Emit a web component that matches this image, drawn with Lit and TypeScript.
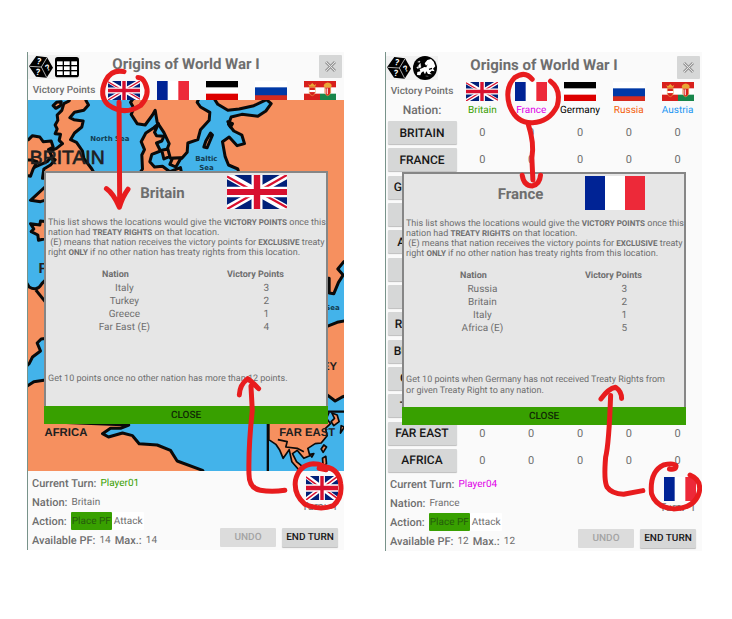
import { LitElement, html, svg, css, nothing } from "lit";
import { customElement, property } from "lit/decorators.js";
import { classMap } from "lit/directives/class-map.js";

type Nation = "britain" | "france" | "germany" | "russia" | "austria";

interface Player {
  view: "map" | "table";
  nation: Nation;
  name: string;
  player: string;
  forces: number;
  points: [string, number][];
  bonus: string;
}

const NATIONS: [Nation, string][] = [
  ["britain", "Britain"],
  ["france", "France"],
  ["germany", "Germany"],
  ["russia", "Russia"],
  ["austria", "Austria"],
];

const REGIONS = [
  "BRITAIN", "FRANCE", "GERMANY", "ITALY", "AUSTRIA", "SPAIN", "EGYPT",
  "ROMANIA", "BULGARIA", "GREECE", "TURKEY", "FAR EAST", "AFRICA",
];

const PLAYERS: Player[] = [
  {
    view: "map", nation: "britain", name: "Britain", player: "Player01", forces: 14,
    points: [["Italy", 3], ["Turkey", 2], ["Greece", 1], ["Far East (E)", 4]],
    bonus: "Get 10 points once no other nation has more than 12 points.",
  },
  {
    view: "table", nation: "france", name: "France", player: "Player04", forces: 12,
    points: [["Russia", 3], ["Britain", 2], ["Italy", 1], ["Africa (E)", 5]],
    bonus: "Get 10 points when Germany has not received Treaty Rights from or given Treaty Right to any nation.",
  },
];

const flagArt = {
  britain: svg`
    <rect width="60" height="36" fill="#012079"/>
    <path d="M0 0L60 36M60 0L0 36" stroke="#fff" stroke-width="7.5"/>
    <path d="M0 1.5L28 18M60 34.5L32 18M60 0L32 17M0 36L28 19" stroke="#d8102e" stroke-width="2.4"/>
    <path d="M30 0V36M0 18H60" stroke="#fff" stroke-width="11"/>
    <path d="M30 0V36M0 18H60" stroke="#d8102e" stroke-width="6.4"/>`,
  france: svg`
    <rect width="60" height="36" fill="#fff"/>
    <rect width="20" height="36" fill="#002395"/>
    <rect x="40" width="20" height="36" fill="#ed2939"/>`,
  germany: svg`
    <rect width="60" height="36" fill="#fff"/>
    <rect width="60" height="12" fill="#000"/>
    <rect y="24" width="60" height="12" fill="#d00"/>`,
  russia: svg`
    <rect width="60" height="36" fill="#fff"/>
    <rect y="12" width="60" height="24" fill="#0039a6"/>
    <rect y="27" width="60" height="9" fill="#d52b1e"/>`,
  austria: svg`
    <rect width="60" height="36" fill="#fff"/>
    <rect width="60" height="12" fill="#d8201c"/>
    <rect y="24" width="30" height="12" fill="#d8201c"/>
    <rect x="30" y="24" width="30" height="12" fill="#18864b"/>
    <path d="M10 12H21V22Q20 27 15.500 28Q11 27 10 22Z" fill="#d8201c" stroke="#e9b44a"/>
    <path d="M10 17H21V21H10Z" fill="#fff"/>
    <path d="M8 5L11 8L15.500 4L20 8L23 5L21 11H10Z" fill="#e9a735"/>
    <path d="M39 12H50V22Q49 27 44.500 28Q40 27 39 22Z" fill="#d8201c" stroke="#e9b44a"/>
    <path d="M37 10Q37 4 44.500 3Q52 4 52 10L50 12H39Z" fill="#e9a735"/>
    <path d="M41 14V24M44 14V25" stroke="#fff" stroke-width="1.500"/>`,
};

const flag = (n: Nation, size: string) => html`
  <svg class="flag ${size}" viewBox="0 0 60 36" preserveAspectRatio="none" role="img" aria-label=${n}>${flagArt[n]}</svg>`;

const diceIcon = html`
  <svg class="icon" viewBox="0 0 72 72" aria-hidden="true">
    <path d="M22 3L54 7L72 38L53 68L21 65L0 34Z" fill="#000"/>
    <path d="M2 34L37 36L54 8M37 36L53 67" fill="none" stroke="#fff" stroke-width="2"/>
    <g fill="#fff" font-family="Roboto, sans-serif" font-weight="700" font-size="26" text-anchor="middle">
      <text x="30" y="28" transform="rotate(12 30 20)">?</text>
      <text x="27" y="60" transform="rotate(6 27 50)">?</text>
      <text x="56" y="47" transform="rotate(-24 56 38)">?</text>
    </g>
  </svg>`;

const tableIcon = html`
  <svg class="icon" viewBox="0 0 72 72" aria-hidden="true">
    <rect y="6" width="72" height="61" rx="8" fill="#000"/>
    <g fill="#fff">
      ${[19, 34, 49].map((y) => [6, 27, 49].map((x) => svg`<rect x=${x} y=${y} width="17" height="11"/>`))}
    </g>
  </svg>`;

const globeIcon = html`
  <svg class="icon" viewBox="0 0 72 72" aria-hidden="true">
    <circle cx="36" cy="36" r="36" fill="#000"/>
    <path d="M35 22L43 12L54 9L62 17L67 31L60 38L65 46L56 44L50 50L57 55L45 54L40 46L36 55L31 46L25 50L22 58L12 57L13 48L22 46L20 39L27 37L34 33L40 34L44 25L39 29Z" fill="#fff"/>
    <path d="M17 28L22 22L24 34L16 37ZM11 34L15 32L14 38ZM14 18L21 15L20 19ZM38 60L46 61" fill="#fff" stroke="#fff"/>
    <path d="M48 40L57 37" stroke="#000" stroke-width="4"/>
  </svg>`;

/* Europe, with the Far East in an inset at the lower right */
const map = html`
  <svg class="map" viewBox="21 165 951 1113" preserveAspectRatio="xMidYMid slice" role="img" aria-label="Map of Europe">
    <rect x="21" y="165" width="951" height="1113" fill="#43b3ea"/>
    <g fill="#f6905f" stroke="#0a0a0a" stroke-width="9" stroke-linejoin="round">
      <path d="M98 182L108 172L122 170L120 182L106 190Z"/>
      <path d="M150 150L146 168L130 176L124 196L110 210L112 226L104 240L110 252L104 266L120 268L116 286L126 296L108 310L88 318L92 336L104 344L90 360L70 372L66 400H230L214 372L190 340L186 318L168 292L150 284L162 264L184 246L188 228L160 224L148 218L162 202L190 196L204 180L196 166L206 150Z"/>
      <path d="M10 290L24 284L36 272L58 276L68 290L92 288L98 306L84 314L94 334L80 350L44 366L10 376Z"/>
      <path d="M346 150L330 172L340 190L332 208L350 236L374 240L396 210L404 196L410 232L430 262L446 296L438 318L450 340H484L500 322L502 294L532 284L540 254L566 226L568 202L540 186L530 172L540 150Z"/>
      <path d="M574 150L592 178L622 196L656 192L700 182L738 164L752 176L736 198L712 214L664 208L632 216L624 238L640 258L664 270L672 296L650 302L626 276L606 290L614 335L624 360L652 372L664 420H880V700H926L926 744L940 746L954 712L968 690L952 672L970 650L1000 640V150Z"/>
      <path d="M340 410L366 372L364 330L372 314L362 290L376 264L400 248L414 236L402 262L408 272L430 274L424 288L408 294L420 318L394 328L388 350L402 366L426 364L448 380L480 368L486 400Z"/>
      <path d="M424 316L442 312L448 334L430 342ZM456 340L482 338L466 366L448 358ZM556 288L570 264L576 270L560 308L550 306ZM622 230L636 236L630 246Z"/>
      <path d="M10 345L34 345L50 350L38 372L30 394L10 390ZM80 420L30 466L60 470L80 464V416Z"/>
      <path d="M80 530L60 528L58 540L30 536L40 552L32 560L52 570L54 586L80 580Z"/>
      <path d="M10 700L26 726Q50 740 64 716L80 700V880L62 882L50 894L60 918L36 936L26 956L10 970Z"/>
      <path d="M46 735L74 770" fill="none"/>
      <path d="M10 1030L40 1010L80 1004V1130L325 1140L300 1150H270L246 1166L264 1176L306 1164L336 1172L356 1196L410 1200L450 1216L470 1248L546 1276L560 1300H10Z"/>
      <path d="M880 860L950 832L990 824V1048L965 1056L944 1068L915 1046L880 1050Z"/>
    </g>
    <path d="M742 1090V1290M742 1100H980" stroke="#0a0a0a" stroke-width="7"/>
    <g fill="#f6905f" stroke="#0a0a0a" stroke-width="5" stroke-linejoin="round">
      <path d="M745 1104H925L918 1120L930 1136L915 1150L920 1172L902 1194L884 1196L862 1210L868 1232L850 1240L830 1216L816 1226L828 1250L850 1268L836 1276L814 1250L806 1214L788 1240L778 1216L766 1198L745 1184Z"/>
      <path d="M934 1104L950 1110L956 1130L940 1142L932 1130L942 1120ZM910 1200L918 1206L908 1222L902 1212ZM906 1240L916 1234L918 1256L908 1264ZM962 1142L972 1146L960 1164ZM868 1228L880 1226L874 1236Z"/>
      <path d="M772 1184L800 1190L796 1206L830 1210L850 1220" fill="none"/>
    </g>
    <g class="place" fill="#202020">
      <text class="country" x="28" y="357">BRITAIN</text>
      <text x="54" y="684" font-size="44">FRANCE</text>
      <text x="72" y="1173">AFRICA</text>
      <text x="776" y="1173">FAR EAST</text>
      <text x="950" y="975" text-anchor="end">TURKEY</text>
    </g>
    <g class="sea" fill="#123c50">
      <text x="209" y="289">North Sea</text>
      <text x="524" y="349">Baltic</text>
      <text x="536" y="375">Sea</text>
      <text x="914" y="796">Sea</text>
    </g>
  </svg>`;

const marks = {
  map: svg`
    <path d="M310 80Q272 72 254 108Q234 152 262 180Q310 214 360 182Q390 150 374 116Q366 98 352 98"/>
    <path d="M295 172L297 480M257 432Q278 446 296 488Q306 456 322 434"/>
    <path d="M657 1053Q658 1022 682 1004Q696 1014 715 1034M692 1026L696 1100Q684 1210 686 1290Q686 1334 720 1340Q754 1346 794 1340"/>
    <path d="M897 1274L918 1278Q912 1260 880 1260Q836 1264 826 1310Q820 1352 854 1382Q900 1402 940 1386Q968 1362 962 1320Q956 1270 902 1268"/>`,
  table: svg`
    <path d="M455 103Q434 76 402 98Q372 130 386 180Q406 236 456 234Q506 232 530 184Q544 134 510 109"/>
    <path d="M443 238Q462 296 454 340L457 406M425 392Q430 424 456 424Q478 418 480 392"/>
    <path d="M662 1065Q684 1034 706 1030Q724 1042 724 1064M691 1055Q686 1200 676 1240Q670 1310 680 1330Q694 1350 730 1352L788 1341"/>
    <path d="M868 1276Q888 1280 888 1266Q880 1256 850 1264Q808 1284 814 1350Q828 1392 880 1396Q946 1394 958 1344Q964 1308 930 1294"/>`,
};

@customElement("game-panel")
export class GamePanel extends LitElement {
  @property({ attribute: false }) data!: Player;

  static styles = css`
    :host { display: block; min-width: 0; }
    .panel {
      position: relative; background: #fafafa; border-left: 1px solid #78938a;
      color: #6e6e6e; overflow: hidden; font-size: 10px; text-rendering: geometricPrecision;
    }
    .panel.table { padding-top: 1px; }
    button { font-family: inherit; text-rendering: inherit; border: 0; padding: 0; margin: 0; border-radius: 1px; color: #161616; }
    .header { display: grid; grid-template-columns: 52px 1fr 52px; height: 29px; }
    .tools { display: flex; gap: 2px; align-self: start; background: #f1f1f1; margin-top: 3px; padding-left: 1px; height: 24px; }
    .tool { background: none; width: 24px; height: 24px; }
    .icon { display: block; width: 24px; height: 24px; }
    .title { margin: 0; font-size: 15px; line-height: 24px; font-weight: 700; text-align: center; white-space: nowrap; }
    .quit { justify-self: end; width: 23px; height: 23px; margin: 3px 2px 0 0; background: #d6d7d7; }
    .quit svg { display: block; width: 13px; height: 13px; margin: 0 auto; }
    .nations, .names, .scores tr { display: grid; grid-template-columns: 72px repeat(5, 1fr); align-items: center; justify-items: center; }
    .nations { height: 19px; }
    .label { font-weight: 500; white-space: nowrap; font-size: 10px; }
    .flag { display: block; }
    .small { width: 32px; height: 19px; }
    .turnflag { width: 32px; height: 24px; }
    .big { width: 60px; height: 34px; }
    .names { height: 18px; }
    .names .label { font-size: 12px; }
    .map { display: block; width: 100%; height: 371px; }
    .place { font-family: "Liberation Sans", sans-serif; font-weight: 700; font-size: 34px; }
    .country { font-size: 58px; font-weight: 400; stroke: #202020; stroke-width: 2px; }
    .sea { font-family: "DejaVu Sans", sans-serif; font-weight: 700; font-size: 21px; }

    .scores { display: flex; flex-direction: column; height: 355px; margin: 0; }
    .scores tbody { display: flex; flex-direction: column; flex: 1; }
    .scores tr { flex: 1; }
    .scores td, .scores th { padding: 0; font-size: 11px; }
    .region { width: 69px; height: 23px; font-size: 12px; font-weight: 500; white-space: nowrap; background: #d6d7d7; box-shadow: 0 1px 1px #bdbdbd; }

    .footer { display: flex; justify-content: space-between; height: 79px; box-sizing: border-box; padding: 3px 6px 1px 4px; }
    .table .footer { height: 77px; padding-top: 1px; }
    .status { display: grid; grid-auto-rows: 18px; row-gap: 1px; margin: 0; align-items: center; white-space: nowrap; }
    .line { display: flex; align-items: center; gap: 4px; }
    .line b { font-size: 11px; font-weight: 500; }
    .choices { display: flex; }
    .choice { font-size: 10px; height: 18px; background: #fff; color: #6e6e6e; padding: 0 1px 0 2px; }
    .choice.on { background: #38a000; color: #255c0c; padding: 0 1px; }
    .side { display: flex; flex-direction: column; align-items: flex-end; padding-top: 2px; }
    .turn { font-size: 11px; line-height: 14px; white-space: pre; }
    .moves { display: flex; gap: 6px; margin-top: auto; padding-bottom: 2px; }
    .move { width: 56px; height: 19px; font-size: 10px; font-weight: 500; white-space: nowrap; background: #d6d7d7; box-shadow: 0 1px 1px #bdbdbd; }
    .move:disabled { color: #a4a4a4; background: #dcdcdc; box-shadow: none; }

    .dialog {
      position: absolute; top: 119px; left: 16px; right: 16px; margin: 0; padding: 0;
      border: 2px solid #868686; border-bottom: 0; background: #e6e6e6; color: #6e6e6e;
      display: flex; flex-direction: column; min-height: 251px;
    }
    .table .dialog { top: 120px; }
    .dialoghead { display: grid; grid-template-columns: 181px 1fr; align-items: center; height: 38px; }
    .dialogtitle { margin: 0; font-size: 15px; line-height: 20px; font-weight: 700; text-align: center; padding: 2px 0 0 52px; }
    .text { margin: 7px 0 0; padding: 0 2px; font-size: 9px; line-height: 10px; }
    .rules { white-space: nowrap; }
    .rules b { font-size: 8px; }
    .list { border-collapse: collapse; width: 100%; margin-top: 11px; font-size: 10px; line-height: 13px; table-layout: fixed; }
    .list th, .list td { box-sizing: border-box; padding: 0; text-align: center; font-weight: 400; }
    .list th { font-size: 9px; font-weight: 700; padding-right: 18px; }
    .list .nation { width: 56%; }
    .list td:last-child { padding-left: 4px; }
    .bonus { margin-top: 40px; padding-right: 12px; line-height: 11px; }
    .close { margin: auto -2px 0; height: 18px; font-size: 10px; font-weight: 500; border-radius: 0; background: #38a000; color: #102a05; }
    .marks { position: absolute; top: 0; left: 0; width: 100%; height: 100%; pointer-events: none; fill: none; stroke: #e81c1e; stroke-width: 15; stroke-linecap: round; stroke-linejoin: round; }

    .britain { color: #38a000; }
    .france { color: #e000e8; }
    .germany { color: #000; }
    .russia { color: #f4600c; }
    .austria { color: #2196f3; }
  `;

  private scores() {
    return html`
      <div class="names">
        <span class="label">Nation:</span>
        ${NATIONS.map(([id, name]) => html`<span class=${id}>${name}</span>`)}
      </div>
      <table class="scores">
        <tbody>
          ${REGIONS.map((r) => html`
            <tr>
              <th scope="row"><button class="region">${r}</button></th>
              ${NATIONS.map(() => html`<td>0</td>`)}
            </tr>`)}
        </tbody>
      </table>`;
  }

  render() {
    const d = this.data;
    if (!d) return nothing;
    const onMap = d.view === "map";
    return html`
      <section class=${classMap({ panel: true, table: !onMap })}>
        <header class="header">
          <div class="tools">
            <button class="tool" aria-label="Dice">${diceIcon}</button>
            <button class="tool" aria-label=${onMap ? "Table" : "Map"}>${onMap ? tableIcon : globeIcon}</button>
          </div>
          <h1 class="title">Origins of World War I</h1>
          <button class="quit" aria-label="Quit">
            <svg viewBox="0 0 13 13"><path d="M2 2L11 11M11 2L2 11" stroke="#999" stroke-width="3"/><path d="M2 2L11 11M11 2L2 11" stroke="#e4e4e4"/></svg>
          </button>
        </header>
        <div class="nations">
          <span class="label">Victory Points</span>
          ${NATIONS.map(([id]) => flag(id, "small"))}
        </div>
        ${onMap ? map : this.scores()}
        <footer class="footer">
          <div class="status">
            <div class="line"><b>Current Turn:</b><span class=${d.nation}>${d.player}</span></div>
            <div class="line"><b>Nation:</b><span>${d.name}</span></div>
            <div class="line"><b>Action:</b>
              <div class="choices">
                <button class="choice on">Place PF</button><button class="choice">Attack</button>
              </div>
            </div>
            <div class="line"><b>Available PF:</b><span>${d.forces}</span><b>Max.:</b><span>${d.forces}</span></div>
          </div>
          <div class="side">
            ${flag(d.nation, "turnflag")}
            <span class="turn">Turn:  1</span>
            <div class="moves">
              <button class="move" disabled>UNDO</button>
              <button class="move">END TURN</button>
            </div>
          </div>
        </footer>
        <div class="dialog" role="dialog" aria-label=${d.name}>
          <div class="dialoghead">
            <h2 class="dialogtitle">${d.name}</h2>
            ${flag(d.nation, "big")}
          </div>
          <p class="text rules">This list shows the locations would give the <b>VICTORY POINTS</b> once this<br>nation had <b>TREATY RIGHTS</b> on that location.<br>&nbsp;(E) means that nation receives the victory points for <b>EXCLUSIVE</b> treaty<br>right <b>ONLY</b> if no other nation has treaty rights from this location.</p>
          <table class="list">
            <thead><tr><th class="nation">Nation</th><th>Victory Points</th></tr></thead>
            <tbody>${d.points.map(([n, p]) => html`<tr><td>${n}</td><td>${p}</td></tr>`)}</tbody>
          </table>
          <p class="text bonus">${d.bonus}</p>
          <button class="close">CLOSE</button>
        </div>
        <svg class="marks" viewBox="${onMap ? 21 : 15} 21 951 1494" preserveAspectRatio="xMinYMin meet" aria-hidden="true">${marks[d.view]}</svg>
      </section>`;
  }
}

@customElement("app-root")
export class AppRoot extends LitElement {
  static styles = css`
    :host { display: block; min-height: 100vh; background: #fff; font-family: Roboto, sans-serif; }
    .page { display: grid; grid-template-columns: 1fr 1fr; gap: 41px; padding: 52px 30px 0 27px; align-items: start; }
  `;

  render() {
    return html`<main class="page">${PLAYERS.map((p) => html`<game-panel .data=${p}></game-panel>`)}</main>`;
  }
}
